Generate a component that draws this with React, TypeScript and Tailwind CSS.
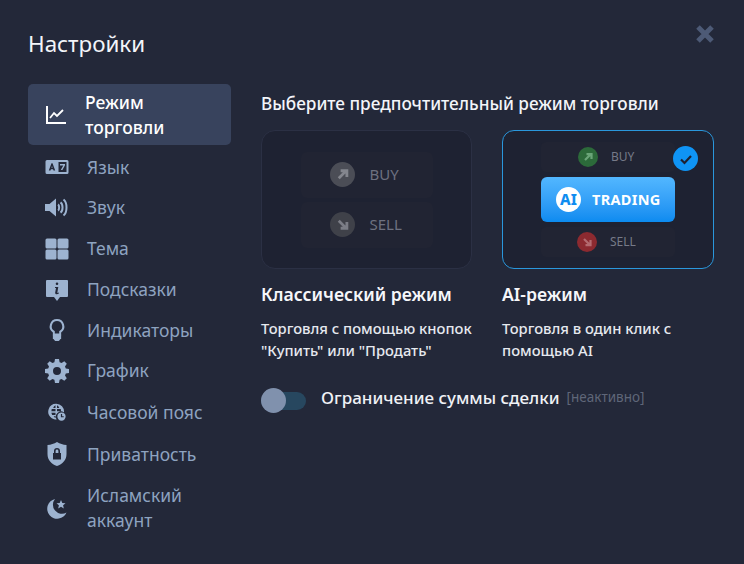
const ic = "w-[24px] h-[24px] fill-[#9db3d0]";

const menu: { label: string; h: string; icon: React.ReactNode }[] = [
  {
    label: "Язык",
    h: "h-[40px]",
    icon: (
      <svg viewBox="0 0 24 24" className={ic}>
        <path fillRule="evenodd" d="M2 5h20a1.500 1.500 0 0 1 1.500 1.500v11A1.500 1.500 0 0 1 22 19H2a1.500 1.500 0 0 1-1.500-1.500v-11A1.500 1.500 0 0 1 2 5Zm11.500 2v10h8V7ZM6.500 8.300 3.800 15.500h1.700l.45-1.300h2.100l.45 1.300h1.700L7.500 8.300Zm.5 2.700.6 1.800H6.400Z" />
        <path d="M15 9h5v1.300l-2.600 4.700h-1.600l2.500-4.600H15Z" />
      </svg>
    ),
  },
  {
    label: "Звук",
    h: "h-[41px]",
    icon: (
      <svg viewBox="0 0 24 24" className="w-[25px] h-[25px] fill-[#9db3d0]">
        <path d="M0 8.500h4.500L11 3v18l-6.500-5.500H0Z" />
        <path d="M13 9c1.500.8 1.500 5.200 0 6" fill="none" stroke="#9db3d0" strokeWidth="2" />
        <path d="M15.500 6.800c2.700 1.800 2.700 8.600 0 10.400" fill="none" stroke="#9db3d0" strokeWidth="2" />
        <path d="M18.500 4c4 3 4 13 0 16" fill="none" stroke="#9db3d0" strokeWidth="2" />
      </svg>
    ),
  },
  {
    label: "Тема",
    h: "h-[41px]",
    icon: (
      <svg viewBox="0 0 24 24" className={ic}>
        <rect x="0.500" y="1.500" width="11" height="10" rx="1.500" />
        <rect x="12.500" y="1.500" width="11" height="10" rx="1.500" />
        <rect x="0.500" y="12.500" width="11" height="10" rx="1.500" />
        <rect x="12.500" y="12.500" width="11" height="10" rx="1.500" />
      </svg>
    ),
  },
  {
    label: "Подсказки",
    h: "h-[41px]",
    icon: (
      <svg viewBox="0 0 24 24" className={ic}>
        <path fillRule="evenodd" d="M2 2h20a1 1 0 0 1 1 1v15a1 1 0 0 1-1 1h-7l-3 4-3-4H2a1 1 0 0 1-1-1V3a1 1 0 0 1 1-1Zm10 2.500a1.300 1.300 0 1 0 0 2.600 1.300 1.300 0 0 0 0-2.600ZM10 9v1h1l-.8 4.500c-.2 1.200.5 1.800 1.500 1.800.9 0 1.700-.4 2.300-1l-.3-.8c-.4.300-.8.400-1 .4-.3 0-.4-.2-.3-.6L13.300 9Z" />
      </svg>
    ),
  },
  {
    label: "Индикаторы",
    h: "h-[40px]",
    icon: (
      <svg viewBox="0 0 24 24" className="w-[22px] h-[22px] fill-[#9db3d0]">
        <path fillRule="evenodd" d="M12 0a8 8 0 0 0-4.500 14.600V18h9v-3.400A8 8 0 0 0 12 0Zm0 2.200a5.800 5.800 0 0 1 3 10.700l-.6.400v2.500H9.600v-2.500l-.6-.4A5.800 5.800 0 0 1 12 2.200Z" />
        <path d="M7.500 17h9v4l-2.500 3h-4l-2.500-3Z" />
      </svg>
    ),
  },
  {
    label: "График",
    h: "h-[41px]",
    icon: (
      <svg viewBox="0 0 24 24" className={ic}>
        <path fillRule="evenodd" d="M10 0h4l.6 3.200 2 .8L19.300 2.200l2.500 2.500L20 7.400l.8 2 3.200.6v4l-3.200.6-.8 2 1.800 2.700-2.500 2.500-2.700-1.800-2 .8L14 24h-4l-.6-3.200-2-.8-2.700 1.800-2.500-2.500L4 16.600l-.8-2L0 14v-4l3.200-.6.8-2-1.800-2.700 2.500-2.500L7.400 4l2-.8Zm2 8a4 4 0 1 0 0 8 4 4 0 0 0 0-8Z" />
      </svg>
    ),
  },
  {
    label: "Часовой пояс",
    h: "h-[42px]",
    icon: (
      <svg viewBox="0 0 24 24" className="w-[18px] h-[18px] fill-[#9db3d0]">
        <path fillRule="evenodd" d="M11 1a10.500 10.500 0 0 0-6 19.200c2 1.300 4 1.800 6.500 1.800a7 7 0 0 1 9.800-9.500A10.500 10.500 0 0 0 11 1ZM10 3v3.500H7c.6-1.700 1.700-3 3-3.500Zm2 0c1.300.5 2.400 1.800 3 3.500h-3ZM5 8h5v3H4.500Zm7 0h5l.4 3H12Zm-7.500 5H10v3H5.500Zm2 4.500H10V20c-1-.5-2-1.400-2.500-2.500Z" />
        <path fillRule="evenodd" d="M18 12.500a5.500 5.500 0 1 0 0 11 5.500 5.500 0 0 0 0-11Zm-.8 2h1.600v3h2.200v1.500h-3.800Z" />
      </svg>
    ),
  },
  {
    label: "Приватность",
    h: "h-[42px]",
    icon: (
      <svg viewBox="0 0 24 24" className={ic}>
        <path fillRule="evenodd" d="M12 0c3 1.800 6 2.800 9.500 3v9c0 6-4 10-9.500 12-5.500-2-9.500-6-9.500-12V3C6 2.800 9 1.800 12 0Zm0 6a3 3 0 0 0-3 3v2H8v6.500h8V11h-1V9a3 3 0 0 0-3-3Zm0 1.600A1.400 1.400 0 0 1 13.400 9v2h-2.800V9A1.400 1.400 0 0 1 12 7.600Z" />
      </svg>
    ),
  },
  {
    label: "Исламский аккаунт",
    h: "h-[65px]",
    icon: (
      <svg viewBox="0 0 24 24" className={ic}>
        <path d="M10 3a10 10 0 1 0 11.500 13.500A9 9 0 0 1 10 3Z" />
        <path d="m16 4 1.300 2.900 3.200.3-2.400 2.100.7 3.100L16 10.800l-2.800 1.600.7-3.100-2.400-2.100 3.200-.3Z" />
      </svg>
    ),
  },
];

const Arrow = ({ down = false, className }: { down?: boolean; className: string }) => (
  <svg viewBox="0 0 24 24" className={className} fill="none" stroke="currentColor" strokeWidth="4.500">
    {down ? <path d="M6 6l11 11M19 8v10H9" /> : <path d="M6 18 17 7M9 6h10v10" />}
  </svg>
);

export default function App() {
  return (
    <div className="w-[744px] h-[564px] overflow-hidden bg-[#232839] relative font-['Noto_Sans',sans-serif] text-white">
      <svg viewBox="0 0 20 20" className="absolute left-[695px] top-[24px] w-[20px] h-[20px]">
        <path d="M3 3l14 14M17 3 3 17" stroke="#4d5a76" strokeWidth="5" />
      </svg>

      <div className="pl-[28px] pt-[28px]">
        <h1 className="text-[22.400px] leading-[32px] font-normal text-[#f3f5f9]">Настройки</h1>

        <div className="flex mt-[24px]">
          <div className="w-[203px] shrink-0">
            <div className="h-[61px] bg-[#38435d] rounded-[5px] flex items-center pl-[17px] mb-[2px]">
              <svg viewBox="0 0 22 22" className="w-[22px] h-[22px]" fill="none" stroke="#fff" strokeWidth="2">
                <path d="M2 2v17h19" />
                <path d="M5 14l4-5 3 3 6-6" strokeWidth="1.800" />
              </svg>
              <span className="ml-[18px] text-[17.500px] leading-[25px] font-medium w-[110px]">Режим торговли</span>
            </div>
            {menu.map((m) => (
              <div key={m.label} className={`${m.h} flex items-center`}>
                <div className="w-[24px] ml-[17px] flex justify-center shrink-0">{m.icon}</div>
                <span className="ml-[18px] text-[17.500px] leading-[25px] text-[#8ea3c0] w-[125px]">{m.label}</span>
              </div>
            ))}
          </div>

          <div className="ml-[30px] w-[453px]">
            <p className="text-[17.200px] leading-[24px] font-medium text-[#f3f5f9] mt-[8px] whitespace-nowrap">
              Выберите предпочтительный режим торговли
            </p>
            <div className="flex gap-[30px] mt-[14px]">
              <div className="w-[211px]">
                <div className="h-[139px] rounded-[14px] bg-[#1e2232] border border-[#2b3044] flex flex-col items-center justify-center gap-[4px]">
                  <div className="w-[132px] h-[46px] rounded-[6px] bg-[#212433] flex items-center pl-[29px]">
                    <div className="w-[25px] h-[25px] rounded-full bg-[#4b4d56] flex items-center justify-center text-[#84868e]">
                      <Arrow className="w-[15px] h-[15px]" />
                    </div>
                    <span className="ml-[15px] text-[15px] text-[#6d7180]">BUY</span>
                  </div>
                  <div className="w-[132px] h-[46px] rounded-[6px] bg-[#212433] flex items-center pl-[29px]">
                    <div className="w-[25px] h-[25px] rounded-full bg-[#3f4149] flex items-center justify-center text-[#7b7d86]">
                      <Arrow down className="w-[15px] h-[15px]" />
                    </div>
                    <span className="ml-[15px] text-[15px] text-[#6d7180]">SELL</span>
                  </div>
                </div>
                <h2 className="mt-[12px] text-[17.600px] leading-[26px] font-semibold text-[#f6f7fa] whitespace-nowrap">Классический режим</h2>
                <p className="mt-[10px] text-[14.750px] leading-[22px] font-medium text-[#e6e9ef] whitespace-nowrap">
                  Торговля с помощью кнопок
                  <br />
                  "Купить" или "Продать"
                </p>
              </div>

              <div className="w-[212px]">
                <div className="h-[139px] rounded-[12px] bg-[#1e2232] border border-[#2a97dc] relative flex flex-col items-center pt-[11px]">
                  <div className="w-[134px] h-[30px] rounded-[5px] bg-[#212433] flex items-center pl-[37px]">
                    <div className="w-[20px] h-[20px] rounded-full bg-[#2c6a3a] flex items-center justify-center text-[#6aa578]">
                      <Arrow className="w-[12px] h-[12px]" />
                    </div>
                    <span className="ml-[13px] text-[12px] text-[#767a88]">BUY</span>
                  </div>
                  <div className="w-[134px] h-[45px] mt-[5px] rounded-[6px] bg-gradient-to-b from-[#52b7ff] to-[#0b8bf0] flex items-center pl-[15px]">
                    <div className="w-[25px] h-[25px] rounded-full bg-white flex items-center justify-center text-[#0f8df0] text-[15px] font-extrabold">
                      AI
                    </div>
                    <span className="ml-[11px] text-[14.500px] font-bold tracking-[0.3px]">TRADING</span>
                  </div>
                  <div className="w-[134px] h-[30px] mt-[5px] rounded-[5px] bg-[#212433] flex items-center pl-[36px]">
                    <div className="w-[20px] h-[20px] rounded-full bg-[#8c2a30] flex items-center justify-center text-[#b36a6f]">
                      <Arrow down className="w-[12px] h-[12px]" />
                    </div>
                    <span className="ml-[13px] text-[12px] text-[#767a88]">SELL</span>
                  </div>
                  <div className="absolute left-[170px] top-[15px] w-[25px] h-[25px] rounded-full bg-[#0f94f5] flex items-center justify-center">
                    <svg viewBox="0 0 14 14" className="w-[14px] h-[14px]" fill="none" stroke="#1e2232" strokeWidth="2.200">
                      <path d="M2 7.500 5.500 11 12 4" />
                    </svg>
                  </div>
                </div>
                <h2 className="mt-[12px] text-[17.600px] leading-[26px] font-semibold text-[#f6f7fa]">AI-режим</h2>
                <p className="mt-[10px] text-[14.750px] leading-[22px] font-medium text-[#e6e9ef] whitespace-nowrap">
                  Торговля в один клик с
                  <br />
                  помощью AI
                </p>
              </div>
            </div>

            <div className="flex items-center mt-[27px]">
              <div className="w-[45px] h-[26px] flex items-center relative">
                <div className="w-full h-[18px] rounded-full bg-[#27475f]" />
                <div className="absolute left-0 top-0 w-[25px] h-[25px] rounded-full bg-[#8091ad]" />
              </div>
              <span className="ml-[15px] text-[17px] font-medium text-[#f0f2f6] mt-[-7px]">Ограничение суммы сделки</span>
              <span className="ml-[7px] text-[13.500px] text-[#5f6678] mt-[-7px]">[неактивно]</span>
            </div>
          </div>
        </div>
      </div>
    </div>
  );
}
